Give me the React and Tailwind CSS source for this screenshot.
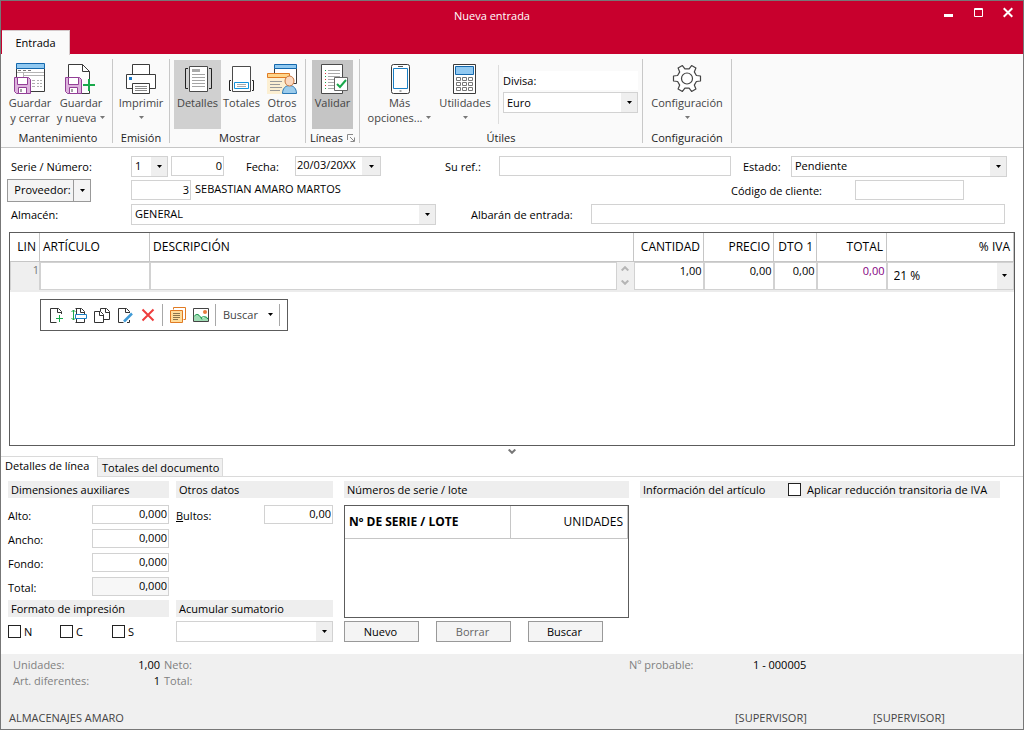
import React from 'react';

const field = "min-w-0 border border-[#d2d2d2] bg-white px-1 pb-0.5 outline-none focus:border-[#7a7a7a]";

function Arrow({ className = "text-black" }) {
    return (
        <svg width="5" height="3" viewBox="0 0 5 3" className={className} aria-hidden="true">
            <path d="M0 0h5L2.5 3z" fill="currentColor" />
        </svg>
    );
}

function Combo({ id, label, options, className = "", selectClass = "" }) {
    return (
        <div className={`relative flex h-[21px] shrink-0 border border-[#d2d2d2] bg-white ${className}`}>
            <select id={id} aria-label={label} className={`w-full appearance-none bg-transparent pl-[3px] pr-4 outline-none ${selectClass}`}>
                {options.map(option => <option key={option}>{option}</option>)}
            </select>
            <span className="pointer-events-none absolute inset-y-0 right-0 flex w-4 items-center justify-center bg-[#efefef]">
                <Arrow />
            </span>
        </div>
    );
}

function Floppy() {
    return (
        <g>
            <path d="M.5 14.5h14l2 2v14h-14l-2-2z" fill="#ddb3dd" stroke="#923f96" />
            <path d="M3.500 14.500h10v7h-10z" fill="#fff" stroke="#923f96" />
            <path d="M4.500 24.500h8v6h-8z" fill="#fff" stroke="#923f96" />
            <path d="M7 26v3" stroke="#444" />
        </g>
    );
}

function SaveCloseIcon() {
    return (
        <svg width="32" height="32" viewBox="0 0 32 32" fill="none">
            <path d="M2.500 5.500h28v23h-28z" fill="#fff" stroke="#3b3b3b" />
            <path d="M2.500.5h28v5h-28z" fill="#91c9f1" stroke="#1468ad" />
            <path d="M4 7.500h3m2 0h3m2 0h3" stroke="#777" />
            <path d="M3 9.500h27M9.500 10v4M9 12.500h21" stroke="#b5b5b5" />
            <path d="M18 17.500h3m2 0h2m1 0h2M18 20.500h3m2 0h2m1 0h2M18 23.500h3m2 0h2m1 0h2" stroke="#b0b0b0" />
            <Floppy />
        </svg>
    );
}

function SaveNewIcon() {
    return (
        <svg width="32" height="32" viewBox="0 0 32 32" fill="none">
            <path d="M3.500 30.500V1.500h14l7 7v22z" fill="#fff" stroke="#3b3b3b" />
            <path d="M17.500 1.500v7h7" stroke="#3b3b3b" />
            <Floppy />
            <path d="M17.500 16.500h14v11h-14z" fill="#fafafa" />
            <path d="M24 16v12M18 22h12" stroke="#19a94b" strokeWidth="2" />
        </svg>
    );
}

function PrintIcon() {
    return (
        <svg width="32" height="32" viewBox="0 0 32 32" fill="none" stroke="#3b3b3b">
            <path d="M7.500 11.500v-10h17v10M1.500 11.500h29v14h-29z" fill="#fff" />
            <path d="M7.500 20.500h17v10h-17z" fill="#fff" />
            <path d="M10 23.500h12M10 25.500h12M10 27.500h12" stroke="#888" />
            <path d="M4 14h3v3H4z" fill="#1979ca" stroke="none" />
        </svg>
    );
}

function DetailsIcon() {
    return (
        <svg width="32" height="32" viewBox="0 0 32 32" fill="none">
            <path d="M7.500 3.500h18v25h-18z" fill="#fff" stroke="#4b4b4b" />
            <path d="M10 6h8v3h-8z" fill="#aaa" />
            <path d="M10 11.500h13M10 14.500h13M10 17.500h13M10 20.500h13M10 23.500h13" stroke="#a5a5a5" />
            <path d="M6 5.500H3.500v20H6M27 5.500h2.500v20H27" stroke="#222" />
        </svg>
    );
}

function TotalsIcon() {
    return (
        <svg width="32" height="32" viewBox="0 0 32 32" fill="none">
            <path d="M6.500 3.500h18v25h-18z" fill="#fff" stroke="#4b4b4b" />
            <path d="M8.500 19.500h14v6h-14z" fill="#fff" stroke="#1593dc" />
            <path d="M11 21.500h9M11 23.500h9" stroke="#aaa" />
            <path d="M5 17.500H3.500v10H5M26 17.500h1.500v10H26" stroke="#222" />
        </svg>
    );
}

function OtherDataIcon() {
    return (
        <svg width="32" height="32" viewBox="0 0 32 32" fill="none">
            <path d="M8.500 5.500h22v15h-22z" fill="#fff" stroke="#3b3b3b" />
            <path d="M8.500 1.500h22v4h-22z" fill="#91c9f1" stroke="#1468ad" />
            <path d="M1 14h22v17H1z" fill="#fcefd2" />
            <path d="M1.500 10.500h22v4h-22z" fill="#ffd58a" stroke="#e07b24" />
            <path d="M4 18.500h12M4 21.500h10M4 24.500h12M4 27.500h10" stroke="#999" />
            <path d="M16.500 30.500c0-5 3-8 7-8s7 3 7 8z" fill="#9cccec" stroke="#2a78b5" />
            <ellipse cx="23.500" cy="18" rx="4.500" ry="5" fill="#fbd9c0" stroke="#c9763e" />
        </svg>
    );
}

function ValidateIcon() {
    return (
        <svg width="32" height="32" viewBox="0 0 32 32" fill="none">
            <path d="M4.500 1.500h21v29h-21z" fill="#fff" stroke="#4b4b4b" />
            <path d="M11 7.500h12M11 10.500h12M11 13.500h12M11 16.500h8M11 19.500h7M11 22.500h7M11 25.500h7" stroke="#aaa" />
            <path d="M8.500 7v1M8.500 13v1M8.500 19v1M8.500 25v1" stroke="#19a94b" />
            <path d="M8.500 10v1M8.500 16v1M8.500 22v1" stroke="#d33" />
            <path d="M17.500 14.500h13v13h-13z" fill="#fff" stroke="#666" />
            <path d="M20 21l3 3 6-7" stroke="#19a94b" strokeWidth="2" />
        </svg>
    );
}

function PhoneIcon() {
    return (
        <svg width="32" height="32" viewBox="0 0 32 32" fill="none">
            <rect x="7.500" y="1.500" width="18" height="29" rx="2" fill="#fff" stroke="#3b3b3b" />
            <path d="M9.500 5.500h14v20h-14z" stroke="#1a7fc4" />
            <path d="M14 3.500h5M15.500 28h2" stroke="#555" />
        </svg>
    );
}

function CalculatorIcon() {
    return (
        <svg width="32" height="32" viewBox="0 0 32 32" fill="none">
            <path d="M4.500 1.500h22v29h-22z" fill="#fff" stroke="#3b3b3b" />
            <path d="M6.500 3.500h18v8h-18z" fill="#91c9f1" stroke="#1468ad" />
            <g stroke="#777">
                <path d="M7.500 14.500h4v3h-4zM13.500 14.500h4v3h-4zM19.500 14.500h4v3h-4z" />
                <path d="M7.500 19.500h4v3h-4zM13.500 19.500h4v3h-4zM19.500 19.500h4v3h-4z" />
                <path d="M7.500 24.500h4v3h-4zM13.500 24.500h4v3h-4zM19.500 24.500h4v3h-4z" />
            </g>
        </svg>
    );
}

function GearIcon() {
    return (
        <svg width="32" height="32" viewBox="0 0 32 32" fill="none" stroke="#444" strokeWidth="1.200">
            <path
                d="M25.400 12.500L29.500 13V18L25.400 18.500 23.300 22.100 24.900 25.900 20.600 28.400 18.100 25.100H13.900L11.400 28.400 7.100 25.900 8.700 22.100 6.600 18.500 2.500 18V13L6.600 12.500 8.700 8.900 7.100 5.100 11.400 2.600 13.900 5.900H18.100L20.600 2.600 24.900 5.100 23.300 8.900z"
                fill="#fff"
                strokeLinejoin="round"
            />
            <circle cx="16" cy="15.500" r="5.500" />
        </svg>
    );
}

function RibbonButton({ icon, lines, menu, width, active = "" }) {
    return (
        <button type="button" className={`flex h-[69px] shrink-0 flex-col items-center pt-[3px] leading-[15px] text-[#444] ${width} ${active}`}>
            {icon}
            <span className="whitespace-nowrap">{lines[0]}</span>
            <span className="flex h-[15px] items-center gap-1 whitespace-nowrap">
                {lines[1]}
                {menu && <Arrow className="text-[#777]" />}
            </span>
        </button>
    );
}

function RibbonGroup({ title, children, className = "", launcher }) {
    return (
        <>
            <section aria-label={title} className={`flex shrink-0 flex-col pt-px ${className}`}>
                <div className="flex h-[70px]">{children}</div>
                <div className="flex h-5 items-center justify-center gap-1 text-[#222]">
                    {title}
                    {launcher && (
                        <button type="button" aria-label="Opciones de líneas">
                            <svg width="8" height="8" viewBox="0 0 8 8" fill="none" stroke="#888">
                                <path d="M.5 6V.5H6M3 3l4 4M7.500 3.500v4h-4" />
                            </svg>
                        </button>
                    )}
                </div>
            </section>
            <div className="h-[84px] w-px shrink-0 bg-[#c8c8c8]" />
        </>
    );
}

const lineTools = [
    {
        name: "Nueva línea",
        icon: <><path d="M13.500 7V4.500l-3-3h-8v14h6M9.500 1.500v4h4" stroke="#333" /><path d="M11.500 8v7M8 11.500h7" stroke="#19a94b" /></>
    },
    {
        name: "Insertar línea",
        icon: <><path d="M4.500 1.500h6l3 3v3M9.500 1.500v4h4M4.500 15.500h9V12M5.500 1v14" stroke="#333" /><path d="M2.500 3v10M.5 5l2-2 2 2M.5 11l2 2 2-2" stroke="#19a94b" /><path d="M4.500 7.500h11v4h-11z" fill="#fff" stroke="#1a7fc4" /></>
    },
    {
        name: "Duplicar línea",
        icon: <><path d="M6.500 4V1.500h6l3 3v8H10M11.500 1.500v4h4" stroke="#333" /><path d="M.5 4.500h6l3 3v8h-9zM5.500 4.500v4h4" fill="#fff" stroke="#333" /></>
    },
    {
        name: "Modificar línea",
        icon: <><path d="M12.500 6V4.500l-3-3h-8v14h5M8.500 1.500v4h4M10 15.500h2.500V13" stroke="#333" /><path d="M7 14.500l8-8" stroke="#3f9ad6" strokeWidth="2.500" /></>
    },
    {
        name: "Eliminar línea",
        icon: <path d="M2.500 2.500l11 11M13.500 2.500l-11 11" stroke="#ee3d3d" strokeWidth="2" />
    }
];

const blockTools = [
    {
        name: "Notas",
        icon: <><path d="M3.500 2.500v-2h12v12h-2" stroke="#e07b24" /><path d="M.5 3.500h12v12H.5z" fill="#ffdc9a" stroke="#e07b24" /><path d="M3 6.500h7M3 8.500h7M3 10.500h7M3 12.500h5" stroke="#8a744c" /></>
    },
    {
        name: "Imagen",
        icon: <><path d="M.5 1.500h15v13H.5z" fill="#fff" stroke="#444" /><path d="M1 9l4-2 5 4 3-2 2 2v3H1z" fill="#9fdcb4" /><path d="M1 9.500c3-4 5-2 8 3M8 11c2-2 4-2 7 1" stroke="#19984b" /><circle cx="12" cy="5" r="2" fill="#e77a3c" /></>
    }
];

function ToolButton({ tool }) {
    return (
        <button type="button" aria-label={tool.name} className="flex h-6 w-[23px] items-center justify-center">
            <svg width="16" height="16" viewBox="0 0 16 16" fill="none">{tool.icon}</svg>
        </button>
    );
}

function SectionTitle({ children }) {
    return <h2 className="flex h-[17px] items-center whitespace-nowrap bg-[#eeeeee] pl-[3px] pt-px">{children}</h2>;
}

function Check({ label, className = "" }) {
    return (
        <label className={`flex items-center gap-[3px] ${className}`}>
            <input type="checkbox" className="size-[13px] appearance-none border border-[#222] bg-white checked:bg-[#444]" />
            {label}
        </label>
    );
}

const dimensions = [
    { id: "alto", label: "Alto:" },
    { id: "ancho", label: "Ancho:" },
    { id: "fondo", label: "Fondo:" },
    { id: "total", label: "Total:", readOnly: true }
];

const lineColumns = ["LIN", "ARTÍCULO", "DESCRIPCIÓN", "CANTIDAD", "PRECIO", "DTO 1", "TOTAL", "% IVA"];

const amounts = [
    { name: "Cantidad", value: "1,00" },
    { name: "Precio", value: "0,00" },
    { name: "Descuento", value: "0,00" },
    { name: "Total línea", value: "0,00", color: "text-[#84007f]" }
];

function TitleBar() {
    return (
        <header className="bg-[#c8002d] text-white">
            <div className="flex h-[29px]">
                <h1 className="flex-1 pl-[50px] pt-1.5 text-center leading-[18px]">Nueva entrada</h1>
                <button type="button" aria-label="Minimizar" className="flex w-[30px] justify-center pt-[6px]">
                    <svg width="10" height="11" viewBox="0 0 10 11"><path d="M1 7h9v3H1z" fill="#fff" /></svg>
                </button>
                <button type="button" aria-label="Maximizar" className="flex w-[30px] justify-center pt-[6px]">
                    <svg width="10" height="11" viewBox="0 0 10 11" fill="none" stroke="#fff"><path d="M1.500 1.500h8v8h-8zM1 2.500h9" /></svg>
                </button>
                <button type="button" aria-label="Cerrar" className="flex w-[30px] justify-center pt-[6px]">
                    <svg width="10" height="11" viewBox="0 0 10 11" fill="none" stroke="#fff" strokeWidth="2"><path d="M.7 1.200l8.600 8.600M9.300 1.200L.7 9.800" /></svg>
                </button>
            </div>
            <nav className="flex h-6 pl-px">
                <button type="button" className="relative -mb-px w-[68px] border-t border-r border-[#d5c8ca] bg-[#fafafa] text-black">Entrada</button>
            </nav>
        </header>
    );
}

function Ribbon() {
    return (
        <div className="flex h-[94px] border-b border-[#c6c6c6] bg-[#fafafa] pt-[5px]">
            <RibbonGroup title="Mantenimiento" className="w-[111px] pl-[3px]">
                <RibbonButton icon={<SaveCloseIcon />} lines={["Guardar", "y cerrar"]} width="w-[52px]" />
                <RibbonButton icon={<SaveNewIcon />} lines={["Guardar", "y nueva"]} width="w-[50px]" menu />
            </RibbonGroup>
            <RibbonGroup title="Emisión" className="w-14">
                <RibbonButton icon={<PrintIcon />} lines={["Imprimir"]} width="w-14" menu />
            </RibbonGroup>
            <RibbonGroup title="Mostrar" className="w-[135px] pl-1">
                <RibbonButton icon={<DetailsIcon />} lines={["Detalles"]} width="w-[47px]" active="bg-[#d0d0d0]" />
                <RibbonButton icon={<TotalsIcon />} lines={["Totales"]} width="w-[41px]" />
                <RibbonButton icon={<OtherDataIcon />} lines={["Otros", "datos"]} width="w-[40px]" />
            </RibbonGroup>
            <RibbonGroup title="Líneas" className="w-[53px]" launcher>
                <div className="pl-1.5">
                    <RibbonButton icon={<ValidateIcon />} lines={["Validar"]} width="w-[41px]" active="bg-[#c5c5c5]" />
                </div>
            </RibbonGroup>
            <RibbonGroup title="Útiles" className="w-[282px]">
                <div className="w-1" />
                <RibbonButton icon={<PhoneIcon />} lines={["Más", "opciones..."]} width="w-[71px]" menu />
                <RibbonButton icon={<CalculatorIcon />} lines={["Utilidades"]} width="w-[60px]" menu />
                <div className="mt-[5px] ml-[3px] h-[59px] w-px bg-[#dddddd]" />
                <div className="ml-1 flex-1 pt-[11px] pr-1">
                    <label htmlFor="divisa" className="mb-0.5 flex h-[19px] items-center bg-white">Divisa:</label>
                    <Combo id="divisa" options={["Euro"]} />
                </div>
            </RibbonGroup>
            <RibbonGroup title="Configuración" className="w-[88px]">
                <RibbonButton icon={<GearIcon />} lines={["Configuración"]} width="w-[88px]" menu />
            </RibbonGroup>
        </div>
    );
}

function DocumentForm() {
    return (
        <form className="pt-1.5 pl-1.5 pr-4">
            <div className="flex h-6 items-center">
                <label htmlFor="serie" className="w-[124px] shrink-0 pl-1 pt-0.5">Serie / Número:</label>
                <Combo id="serie" options={["1"]} className="w-[37px]" />
                <input aria-label="Número" defaultValue="0" className={`ml-[3px] h-5 w-[53px] !px-px text-right ${field}`} />
                <label htmlFor="fecha" className="ml-[22px] w-[49px] shrink-0 pt-0.5">Fecha:</label>
                <div className="flex h-5 w-[86px] shrink-0 border border-[#d2d2d2]">
                    <input id="fecha" defaultValue="20/03/20XX" className="w-full min-w-0 pl-px pb-0.5 outline-none" />
                    <button type="button" aria-label="Abrir calendario" className="flex w-[18px] shrink-0 items-center justify-center bg-[#efefef]"><Arrow /></button>
                </div>
                <label htmlFor="ref" className="ml-16 w-[54px] shrink-0 pt-0.5">Su ref.:</label>
                <input id="ref" className={`h-5 flex-1 ${field}`} />
                <label htmlFor="estado" className="ml-3 w-12 shrink-0 pt-0.5">Estado:</label>
                <Combo id="estado" options={["Pendiente"]} className="w-[216px]" />
            </div>
            <div className="flex h-6 items-center">
                <div className="mr-10 flex h-[23px] w-[84px] shrink-0 border border-[#999] bg-[#f4f4f4]">
                    <button type="button" className="flex-1 border-r border-[#999] pl-1">Proveedor:</button>
                    <button type="button" aria-label="Opciones de proveedor" className="flex w-4 items-center justify-center"><Arrow /></button>
                </div>
                <input aria-label="Código de proveedor" defaultValue="3" className={`h-5 w-[60px] !px-px text-right ${field}`} />
                <span className="flex-1 pl-1 pb-0.5">SEBASTIAN AMARO MARTOS</span>
                <label htmlFor="cliente" className="w-[124px] pt-0.5">Código de cliente:</label>
                <input id="cliente" className={`mr-[43px] h-5 w-[109px] ${field}`} />
            </div>
            <div className="flex h-6 items-center">
                <label htmlFor="almacen" className="w-[124px] shrink-0 pl-1 pt-0.5">Almacén:</label>
                <Combo id="almacen" options={["GENERAL"]} className="w-[305px]" />
                <label htmlFor="albaran" className="ml-[35px] w-[120px] shrink-0 pt-0.5">Albarán de entrada:</label>
                <input id="albaran" className={`mr-0.5 h-5 flex-1 ${field}`} />
            </div>
        </form>
    );
}

function LinesGrid() {
    const cell = "block h-7 w-full border border-[#d2d2d2] px-px outline-none";

    return (
        <div className="mx-2 mt-1.5 min-h-[214px] flex-1 border border-[#5c5c5c]">
            <table className="w-full table-fixed border-collapse">
                <colgroup>
                    <col className="w-[29px]" />
                    <col className="w-[110px]" />
                    <col />
                    <col className="w-[70px]" />
                    <col className="w-[70px]" />
                    <col className="w-[43px]" />
                    <col className="w-[70px]" />
                    <col className="w-[127px]" />
                </colgroup>
                <thead>
                    <tr className="h-7 text-xs">
                        {lineColumns.map((name, i) => (
                            <th key={name} className={`border-r border-b border-[#c6c6c6] px-[3px] font-normal whitespace-nowrap ${i === 1 || i === 2 ? "text-left" : "text-right"}`}>{name}</th>
                        ))}
                    </tr>
                </thead>
                <tbody>
                    <tr className="border-b-2 border-[#ececec] align-top">
                        <td className="border border-[#d2d2d2] bg-[#efefef] p-0 text-right text-[#777]">1</td>
                        <td className="p-0"><input aria-label="Artículo" className={cell} /></td>
                        <td className="p-0">
                            <div className="flex">
                                <textarea aria-label="Descripción" rows={1} className={`${cell} min-w-0 flex-1 resize-none`} />
                                <div className="flex w-[17px] flex-col items-center justify-center gap-[9px] bg-[#efefef]">
                                    <svg width="8" height="5" viewBox="0 0 8 5" fill="none" stroke="#b5b5b5" strokeWidth="2"><path d="M.7 4.500L4 1.200l3.300 3.300" /></svg>
                                    <svg width="8" height="5" viewBox="0 0 8 5" fill="none" stroke="#b5b5b5" strokeWidth="2"><path d="M.7.5L4 3.800 7.300.5" /></svg>
                                </div>
                            </div>
                        </td>
                        {amounts.map(amount => (
                            <td key={amount.name} className="p-0">
                                <input aria-label={amount.name} defaultValue={amount.value} className={`${cell} pb-2.5 text-right ${amount.color || ""}`} />
                            </td>
                        ))}
                        <td className="p-0">
                            <Combo label="% IVA" options={["21 %"]} className="!h-7" selectClass="!pl-1.5 text-xs" />
                        </td>
                    </tr>
                </tbody>
            </table>
            <div className="mt-[7px] ml-[30px] inline-flex h-8 items-center border border-[#5c5c5c] pl-[3px] pr-[7px]">
                {lineTools.map(tool => <ToolButton key={tool.name} tool={tool} />)}
                <div className="mx-[3px] h-[22px] w-px bg-[#a8a8a8]" />
                {blockTools.map(tool => <ToolButton key={tool.name} tool={tool} />)}
                <div className="mx-[3px] h-[22px] w-px bg-[#a8a8a8]" />
                <button type="button" className="flex w-[60px] items-center justify-between pl-1 pr-1.5 text-[#444]">
                    Buscar
                    <Arrow />
                </button>
                <div className="h-[22px] w-px bg-[#a8a8a8]" />
            </div>
        </div>
    );
}

function LineDetails() {
    const button = "h-[21px] w-[75px] border border-[#999] bg-[#f4f4f4] pt-px pr-0.5";

    return (
        <div className="flex pt-1 pb-3 pl-[7px]">
            <section className="w-[161px] shrink-0">
                <SectionTitle>Dimensiones auxiliares</SectionTitle>
                <div className="pt-1">
                    {dimensions.map(dimension => (
                        <div key={dimension.id} className="flex h-6 items-center">
                            <label htmlFor={dimension.id} className="w-[84px] shrink-0 pt-1">{dimension.label}</label>
                            <input
                                id={dimension.id}
                                defaultValue="0,000"
                                readOnly={dimension.readOnly}
                                className={`h-[19px] flex-1 !px-px text-right ${field} ${dimension.readOnly ? "!bg-[#f7f7f7]" : ""}`}
                            />
                        </div>
                    ))}
                </div>
                <div className="mt-0.5"><SectionTitle>Formato de impresión</SectionTitle></div>
                <div className="mt-1 flex h-[21px]">
                    <Check label="N" className="w-[52px]" />
                    <Check label="C" className="w-[52px]" />
                    <Check label="S" />
                </div>
            </section>

            <section className="ml-[7px] w-[157px] shrink-0">
                <SectionTitle>Otros datos</SectionTitle>
                <div className="h-[100px] pt-1">
                    <div className="flex h-6 items-center justify-between">
                        <label htmlFor="bultos" className="pt-1"><u>B</u>ultos:</label>
                        <input id="bultos" defaultValue="0,00" className={`h-[19px] w-[69px] !px-px text-right ${field}`} />
                    </div>
                </div>
                <div className="mt-0.5"><SectionTitle>Acumular sumatorio</SectionTitle></div>
                <Combo label="Acumular sumatorio" options={[""]} className="mt-1" />
            </section>

            <section className="ml-[11px] w-[285px] shrink-0">
                <SectionTitle>Números de serie / lote</SectionTitle>
                <div className="mt-[7px] h-[113px] border border-[#5c5c5c]">
                    <table className="w-full table-fixed border-collapse">
                        <thead>
                            <tr className="h-8 text-xs">
                                <th className="w-[165px] border-r border-b border-[#c6c6c6] px-1 text-left">Nº DE SERIE / LOTE</th>
                                <th className="border-r border-b border-[#c6c6c6] px-1 text-right font-normal">UNIDADES</th>
                            </tr>
                        </thead>
                    </table>
                </div>
                <div className="mt-[3px] flex gap-[17px]">
                    <button type="button" className={button}>Nuevo</button>
                    <button type="button" className={`${button} text-[#666]`}>Borrar</button>
                    <button type="button" className={button}>Buscar</button>
                </div>
            </section>

            <section className="mr-[23px] ml-[11px] flex-1">
                <div className="flex h-[17px] items-center bg-[#eeeeee] pl-[3px]">
                    <h2 className="w-[145px] pt-px whitespace-nowrap">Información del artículo</h2>
                    <Check label="Aplicar reducción transitoria de IVA" className="!gap-1.5 whitespace-nowrap" />
                </div>
            </section>
        </div>
    );
}

export default function App() {
    return (
        <div className="flex min-h-screen flex-col border border-[#777] bg-white font-['Open_Sans','Noto_Sans',sans-serif] text-[11px] leading-4 text-black">
            <TitleBar />
            <Ribbon />
            <main className="flex flex-1 flex-col">
                <DocumentForm />
                <LinesGrid />
                <button type="button" aria-label="Contraer detalles" className="flex h-2.5 items-center justify-center">
                    <svg width="8" height="5" viewBox="0 0 8 5" fill="none" stroke="#777" strokeWidth="2"><path d="M.7.5L4 3.800 7.300.5" /></svg>
                </button>
                <div role="tablist" className="flex h-[21px] items-end border-b border-[#dadada]">
                    <button type="button" role="tab" aria-selected="true" className="relative -mb-px h-[21px] w-[97px] border-t border-r border-[#dadada] bg-white px-1 pb-0.5 text-left whitespace-nowrap">Detalles de línea</button>
                    <button type="button" role="tab" aria-selected="false" className="h-[18px] w-[125px] border-t border-r border-[#dadada] bg-[#f0f0f0] pt-px pl-1 text-left whitespace-nowrap">Totales del documento</button>
                </div>
                <LineDetails />
            </main>
            <footer className="bg-[#f0f0f0] pt-[3px] pb-[3px] text-[#808080]">
                <div className="flex pl-3">
                    <dl className="grid w-[616px] grid-cols-[90px_53px_1fr] gap-x-1">
                        <dt>Unidades:</dt>
                        <dd className="text-right text-black">1,00</dd>
                        <dt>Neto:</dt>
                        <dt className="col-start-1">Art. diferentes:</dt>
                        <dd className="text-right text-black">1</dd>
                        <dt>Total:</dt>
                    </dl>
                    <span className="w-[124px]">Nº probable:</span>
                    <span className="text-black">1 - 000005</span>
                </div>
                <div className="mt-[21px] flex pl-2 text-[#444]">
                    <span className="flex-1">ALMACENAJES AMARO</span>
                    <span className="w-[138px]">[SUPERVISOR]</span>
                    <span className="w-[150px]">[SUPERVISOR]</span>
                </div>
            </footer>
        </div>
    );
}
